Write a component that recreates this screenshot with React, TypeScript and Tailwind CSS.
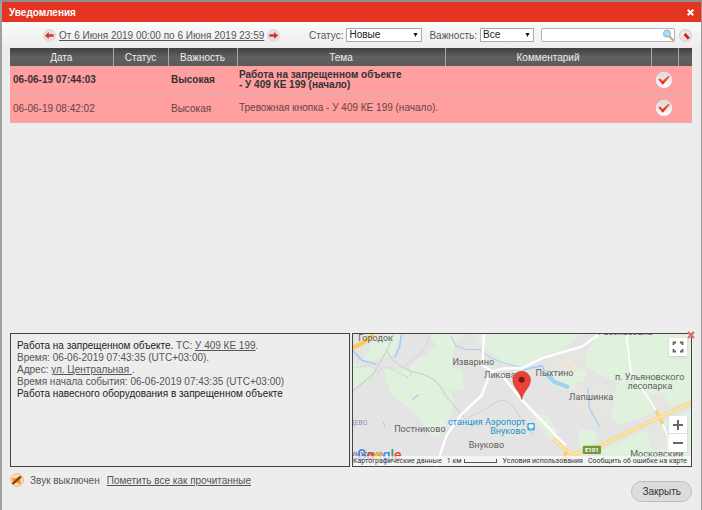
import React from 'react';
import clsx from 'clsx';

type Notice = {
  id: number;
  date: string;
  priority: string;
  subject: string[];
  unread: boolean;
};

const notices: Notice[] = [
  { id: 1, date: '06-06-19 07:44:03', priority: 'Высокая', subject: ['Работа на запрещенном объекте', '- У 409 КЕ 199 (начало)'], unread: true },
  { id: 2, date: '06-06-19 08:42:02', priority: 'Высокая', subject: ['Тревожная кнопка - У 409 КЕ 199 (начало).'], unread: false },
];

const headCell = 'border-r border-[#a8a8a8] last:border-r-0 p-0 text-center font-normal';

function ArrowIcon({ flip = false }: { flip?: boolean }) {
  return (
    <svg viewBox="0 0 13 13" className={clsx('size-[13px]', flip && 'rotate-180')} aria-hidden="true">
      <circle cx="6.5" cy="6.5" r="6.2" fill="#e0e0e0" stroke="#d0d0d0" strokeWidth=".5" />
      <path d="M2 6.5 5.800 3v2.200h4.800v2.600H5.800V10z" fill="#e03020" />
    </svg>
  );
}

function CheckIcon() {
  return (
    <svg viewBox="0 0 18 18" className="size-[18px]" aria-hidden="true">
      <defs>
        <linearGradient id="disc" x1="0" y1="0" x2="0" y2="1">
          <stop offset="0" stopColor="#d8d8d8" />
          <stop offset="1" stopColor="#fff" />
        </linearGradient>
        <linearGradient id="tick" x1="0" y1="0" x2="0" y2="1">
          <stop offset="0" stopColor="#f0803a" />
          <stop offset="1" stopColor="#f01010" />
        </linearGradient>
      </defs>
      <circle cx="9" cy="9" r="8" fill="url(#disc)" stroke="#f4eded" strokeWidth="1" />
      <circle cx="9" cy="9" r="8.6" fill="none" stroke="#c9a0a0" strokeWidth=".5" />
      <path d="m3.200 8.400 2-1.200 2.400 2.800 5.800-5.400 1.400 1.200-7 8z" fill="url(#tick)" />
    </svg>
  );
}

function Select({ id, value, className }: { id: string; value: string; className: string }) {
  return (
    <div className={clsx('relative flex', className)}>
      <select id={id} className="h-[14px] w-full appearance-none border border-[#a9a9a9] bg-white pl-[2px] text-[10px] leading-[12px] text-[#222]">
        <option>{value}</option>
      </select>
      <svg viewBox="0 0 5 5" className="pointer-events-none absolute top-[5px] right-1 size-[5px]" aria-hidden="true">
        <path d="M.5 0h4l-2 4z" fill="#111" />
      </svg>
    </div>
  );
}

function Toolbar() {
  return (
    <div className="flex h-[26px] items-center bg-linear-to-b from-[#fbfbfb] to-[#ededed] pr-[9px] pl-[41px] text-[#555]">
      <button type="button" aria-label="Предыдущий период">
        <ArrowIcon />
      </button>
      <a href="#period" className="mx-[3px] whitespace-nowrap underline">
        От 6 Июня 2019 00:00 по 6 Июня 2019 23:59
      </a>
      <button type="button" aria-label="Следующий период">
        <ArrowIcon flip />
      </button>
      <div className="ml-auto flex items-center">
        <label htmlFor="status" className="mr-[3px]">Статус:</label>
        <Select id="status" value="Новые" className="w-[76px]" />
        <label htmlFor="priority" className="mr-[3px] ml-[7px]">Важность:</label>
        <Select id="priority" value="Все" className="w-[54px]" />
        <div className="relative ml-[7px] flex">
          <input type="text" aria-label="Поиск" className="h-[14px] w-[134px] rounded-[2px] border border-[#b5b5b5] bg-white pr-4 pl-1 outline-none" />
          <svg viewBox="0 0 12 12" className="absolute top-[1px] right-[1px] size-[12px]" aria-hidden="true">
            <path d="m7 7 4 4" stroke="#d8a25a" strokeWidth="2" strokeLinecap="round" />
            <circle cx="5" cy="4.6" r="3.5" fill="#a9dcf8" stroke="#7fb0d0" />
          </svg>
        </div>
        <button type="button" aria-label="Сбросить" className="ml-1">
          <svg viewBox="0 0 13 13" className="size-[13px]" aria-hidden="true">
            <circle cx="6.5" cy="6.5" r="6" fill="#e4e4e4" stroke="#c8c8c8" strokeWidth=".8" />
            <path d="m2.8 3.4 3.6 3.4M2.6 5.6 5 2.6" stroke="#fff" strokeWidth=".9" />
            <path d="m5.6 5 4.200 4.600" stroke="#e01414" strokeWidth="2.8" />
          </svg>
        </button>
      </div>
    </div>
  );
}

function NoticeTable() {
  return (
    <table className="w-full table-fixed border-collapse text-[#444]">
      <colgroup>
        <col className="w-[103px]" />
        <col className="w-[55px]" />
        <col className="w-[69px]" />
        <col />
        <col className="w-[206px]" />
        <col className="w-[27px]" />
        <col className="w-[14px]" />
      </colgroup>
      <thead>
        <tr className="h-[18px] bg-linear-to-b from-[#404040] via-[#606060] to-[#5a5a5a] text-[#eee]">
          <th className={headCell}>Дата</th>
          <th className={headCell}>Статус</th>
          <th className={headCell}>Важность</th>
          <th className={headCell}>Тема</th>
          <th className={headCell}>Комментарий</th>
          <th className={headCell}></th>
          <th className={headCell}></th>
        </tr>
      </thead>
      <tbody>
        {notices.map((n) => (
          <tr key={n.id} className={clsx('h-[28px] border-b border-[#d9b3b0] bg-[#ff9f9f]', n.unread ? 'font-bold text-[#333]' : 'text-[#664444]')}>
            <td className="p-0 pl-[3px]">{n.date}</td>
            <td className="p-0"></td>
            <td className="p-0 pl-[3px]">{n.priority}</td>
            <td className="p-0 pl-[2px] leading-[10px]">
              {n.subject.map((line) => (
                <div key={line}>{line}</div>
              ))}
            </td>
            <td className="p-0"></td>
            <td className="p-0">
              <button type="button" aria-label="Прочитано" className="block pl-1">
                <CheckIcon />
              </button>
            </td>
            <td className="p-0"></td>
          </tr>
        ))}
      </tbody>
    </table>
  );
}

function Details() {
  return (
    <div className="h-[134px] border border-[#444] px-[6px] py-[6px] leading-[12px] text-[#555]">
      <p>
        <span className="text-[#222]">Работа на запрещенном объекте.</span> ТС: <a href="#vehicle" className="underline">У 409 КЕ 199</a>.
      </p>
      <p>Время: 06-06-2019 07:43:35 (UTC+03:00).</p>
      <p>Адрес: <a href="#address" className="underline">ул. Центральная </a>.</p>
      <p>Время начала события: 06-06-2019 07:43:35 (UTC+03:00)</p>
      <p className="text-[#222]">Работа навесного оборудования в запрещенном объекте</p>
    </div>
  );
}

type Place = { name: string; x: number; y: number; size?: number; color?: string };

const places: Place[] = [
  { name: 'Городок', x: 95, y: 47 },
  { name: 'Изварино', x: 386, y: 120 },
  { name: 'Ликова', x: 465, y: 157 },
  { name: 'Пыхтино', x: 628, y: 152 },
  { name: 'п. Ульяновского', x: 911, y: 164 },
  { name: 'лесопарка', x: 912, y: 191 },
  { name: 'Лапшинка', x: 737, y: 223 },
  { name: 'Постниково', x: 227, y: 320 },
  { name: 'Внуково', x: 425, y: 367 },
  { name: 'Московский', x: 932, y: 392 },
  { name: 'Рассказовка', x: 838, y: 31 },
  { name: 'ДЕВО', x: 44, y: 298, size: 20, color: '#8b93ad' },
  { name: 'унжино', x: 69, y: 392 },
  { name: 'станция Аэропорт', x: 426, y: 299, color: '#1a94cf' },
  { name: 'Внуково', x: 489, y: 326, color: '#1a94cf' },
];

const googleLetters = [
  ['G', '#4285f4'],
  ['o', '#ea4335'],
  ['o', '#fbbc05'],
  ['g', '#4285f4'],
  ['l', '#34a853'],
  ['e', '#ea4335'],
];

function MapDrawing() {
  return (
    <svg viewBox="24 27 1014 393" preserveAspectRatio="xMidYMid slice" className="absolute inset-0 size-full" role="img" aria-label="Карта">
      <rect x="-400" y="27" width="1900" height="393" fill="#e4e4e4" />
      {/* forests */}
      <g fill="#e0f1de">
        <path d="M85 50l45-23h40l-20 60-40 15-50 5zM24 112l70 18-15 25-55 38z" />
        <path d="M258 27h95l-25 45-5 60 30 5 5 60-40-5 10 40-10 35-37 67h-17l-63-82-60-45-25-78 75 8 5-18 55-35 25-20-20-35z" />
        <path d="M390 27h320l-60 45-70 25-45 30-60-10-30-30-50-20z" />
        <path d="M590 150l110-30 25 25-20 40-40 10-50-20z" />
        <path d="M720 80l40-53h278v200l-240 55-5-40 25-70-50-20-45-30z" />
        <path d="M571 262l30 5 40 50-10 25-25-10-35-45z" />
        <path d="M770 372l268-122v170H760z" />
        <path d="M790 240l120-40 20 60-110 40zM700 310l60 10-20 40-40 5z" />
      </g>
      <g fill="#e7e5e1">
        <path d="M610 95l60-35 50 25-15 45-60 15-40-25z" />
        <path d="M340 60l45-20 50 40-10 40-90-10zM905 215l45-15 20 40-45 25z" />
        <path d="M900 310l60-15 10 70-50 10z" />
        <path d="M690 170l110 5 10 60-40 60-70-20-20-60z" />
      </g>
      <g fill="none" stroke="#a3d0f5" strokeLinecap="round">
        <path d="M24 73l30 32 42 12M172 30l-6 38-14 27" strokeWidth="5" />
        <path d="M320 35l15 28 28 10 40 0 35 25 40 15 55 15" strokeWidth="3" />
        <path d="M535 135l25-8 30-5 18 35" strokeWidth="5" />
        <path d="M608 150l20 20 38 14" strokeWidth="13" />
        <path d="M728 190l3 55 18 35 14 22M205 222l18-14M119 290l3 12" strokeWidth="4" />
      </g>
      <path d="M85 395l60-55 65-30 20-40" fill="none" stroke="#cfe0ee" strokeWidth="2" />
      <path d="M24 200l65-55 40-70 20-48M128 75q20 45 80 65 70 10 95 70l60 70" fill="none" stroke="#ccc" strokeWidth="3" />
      <path d="M24 128l55-8 20 20 30-15 60 30 15-10-20-25 55-45 20-50" fill="none" stroke="#c0c0c0" strokeWidth="2" strokeDasharray="8 4" />
      <path d="M370 275q50-20 75-40 35-25 60 10l60 85" fill="none" stroke="#d0d0d0" strokeWidth="3" />
      <g fill="none" stroke="#fff">
        <path d="M276 420l30-91 45-63 60-56 25-66q20-18 95-15l60-30 120-35 50-37M418 27l-5 93 35 20" strokeWidth="7" />
        <path d="M466 144l65 80 130 135" strokeWidth="7" />
        <path d="M841 27l15 117 55 80 35 60 20 50v60" strokeWidth="5" />
      </g>
      <path d="M655 115l25-8 12 20-25 15z" fill="none" stroke="#fdeab8" strokeWidth="4" />
      {/* motorway */}
      <g fill="none">
        <path d="M621 339l40 32 20 15 70-20 190-92 100-45M655 405l10-35M930 255l20 40" stroke="#f3d27a" strokeWidth="10" />
        <path d="M621 339l40 32 20 15 70-20 190-92 100-45" stroke="#ffe79c" strokeWidth="6" />
        <path d="M24 70l30-15 35-25" stroke="#fbcb52" strokeWidth="12" />
      </g>
      <rect x="712" y="360" width="54" height="24" rx="3" fill="#6c9b38" />
      <text x="739" y="379" textAnchor="middle" fontSize="18" fontWeight="700" fill="#fff">E101</text>
      <g fontFamily="Roboto, sans-serif" textAnchor="middle">
        {places.map((p) => (
          <text key={p.name + p.x} x={p.x} y={p.y} fontSize={p.size ?? 27} fill={p.color ?? '#616161'}>{p.name}</text>
        ))}
      </g>
      <rect x="547" y="292" width="22" height="22" rx="4" fill="#2aa5df" />
      <path d="M552 297h12v9h-12zM553 310h10" fill="#fff" stroke="#fff" strokeWidth="2" />
      <path d="M530 222c-4-25-26-35-26-58a26 26 0 0 1 52 0c0 23-22 33-26 58z" fill="#ea4335" stroke="#c5352a" strokeWidth="2" />
      <circle cx="530" cy="163" r="9" fill="#7d1512" />
    </svg>
  );
}

function MapPanel() {
  return (
    <div className="relative h-[134px] border border-[#444]">
      <div className="relative flex h-full flex-col justify-end overflow-hidden font-[Roboto,sans-serif]">
        <MapDrawing />
        <div className="absolute bottom-1 left-1 text-[14px] leading-[14px] font-medium" aria-label="Google">
          {googleLetters.map(([letter, color], i) => (
            <span key={i} style={{ color }}>{letter}</span>
          ))}
        </div>
        <div className="relative flex h-[10px] items-center justify-between bg-white/60 pr-1 text-[7px] leading-[10px] whitespace-nowrap text-[#333]">
          <span>Картографические данные</span>
          <span className="flex items-center gap-[3px]">
            1 км
            <span className="h-1 w-[33px] border border-t-0 border-[#555]" />
          </span>
          <a href="#terms">Условия использования</a>
          <a href="#report">Сообщить об ошибке на карте</a>
        </div>
        <button type="button" aria-label="На весь экран" className="absolute top-1 right-1 flex size-[18px] items-center justify-center bg-white shadow-sm">
          <svg viewBox="0 0 12 12" className="size-[12px]" fill="none" stroke="#666" strokeWidth="1.8">
            <path d="M1.500 4V1.500H4M8 1.500h2.500V4M10.500 8v2.500H8M4 10.500H1.500V8" />
          </svg>
        </button>
        <div className="absolute right-1 bottom-[14px] flex w-[18px] flex-col divide-y divide-[#e0e0e0] bg-white shadow-sm">
          <button type="button" aria-label="Увеличить" className="flex h-[18px] items-center justify-center">
            <svg viewBox="0 0 10 10" className="size-[10px]" stroke="#666" strokeWidth="2"><path d="M0 5h10M5 0v10" /></svg>
          </button>
          <button type="button" aria-label="Уменьшить" className="flex h-[18px] items-center justify-center">
            <svg viewBox="0 0 10 10" className="size-[10px]" stroke="#666" strokeWidth="2"><path d="M0 5h10" /></svg>
          </button>
        </div>
      </div>
      <button type="button" aria-label="Закрыть карту" className="absolute -top-[3px] -right-1">
        <svg viewBox="0 0 8 8" className="size-[8px]" stroke="#e07070" strokeWidth="2.4"><path d="m1 1 6 6M7 1 1 7" /></svg>
      </button>
    </div>
  );
}

export default function App() {
  return (
    <div className="flex min-h-screen flex-col border-t-2 border-r border-l-2 border-t-[#8e8e8e] border-r-[#999] border-l-[#a0a0a0] bg-[#ededed] font-['Liberation_Sans',Arial,sans-serif] text-[10px] leading-[13px]">
      <header className="flex h-[20px] items-center justify-between bg-[#e43422] px-[7px] text-white">
        <h1 className="font-bold">Уведомления</h1>
        <button type="button" aria-label="Закрыть окно">
          <svg viewBox="0 0 7 7" className="size-[7px]" stroke="#fff" strokeWidth="2"><path d="m.7.7 5.6 5.6M6.3.7.7 6.3" /></svg>
        </button>
      </header>
      <Toolbar />
      <main className="flex flex-1 flex-col pr-[9px] pl-[8px]">
        <div className="flex-1">
          <NoticeTable />
        </div>
        <div className="grid grid-cols-2 gap-[2px]">
          <Details />
          <MapPanel />
        </div>
        <footer className="flex h-[43px] items-start justify-between pt-[6px] text-[#555]">
          <div className="flex items-center">
            <svg viewBox="0 0 14 14" className="size-[14px]" aria-hidden="true">
              <circle cx="7" cy="7" r="6.3" fill="#fbe3c0" stroke="#f2ae62" />
              <path d="M2.500 5H6l4.500-2.500v9L6 9.500H2.500z" fill="#f29226" />
              <path d="M2.5 11 11 3.5" stroke="#6b4220" strokeWidth="2.2" />
            </svg>
            <span className="ml-[6px]">Звук выключен</span>
            <a href="#read-all" className="ml-[7px] underline">Пометить все как прочитанные</a>
          </div>
          <button type="button" className="mt-2 h-[21px] rounded-full border border-[#bdbdbd] bg-[#dcdcdc] px-[10px] text-[#333]">Закрыть</button>
        </footer>
      </main>
    </div>
  );
}
